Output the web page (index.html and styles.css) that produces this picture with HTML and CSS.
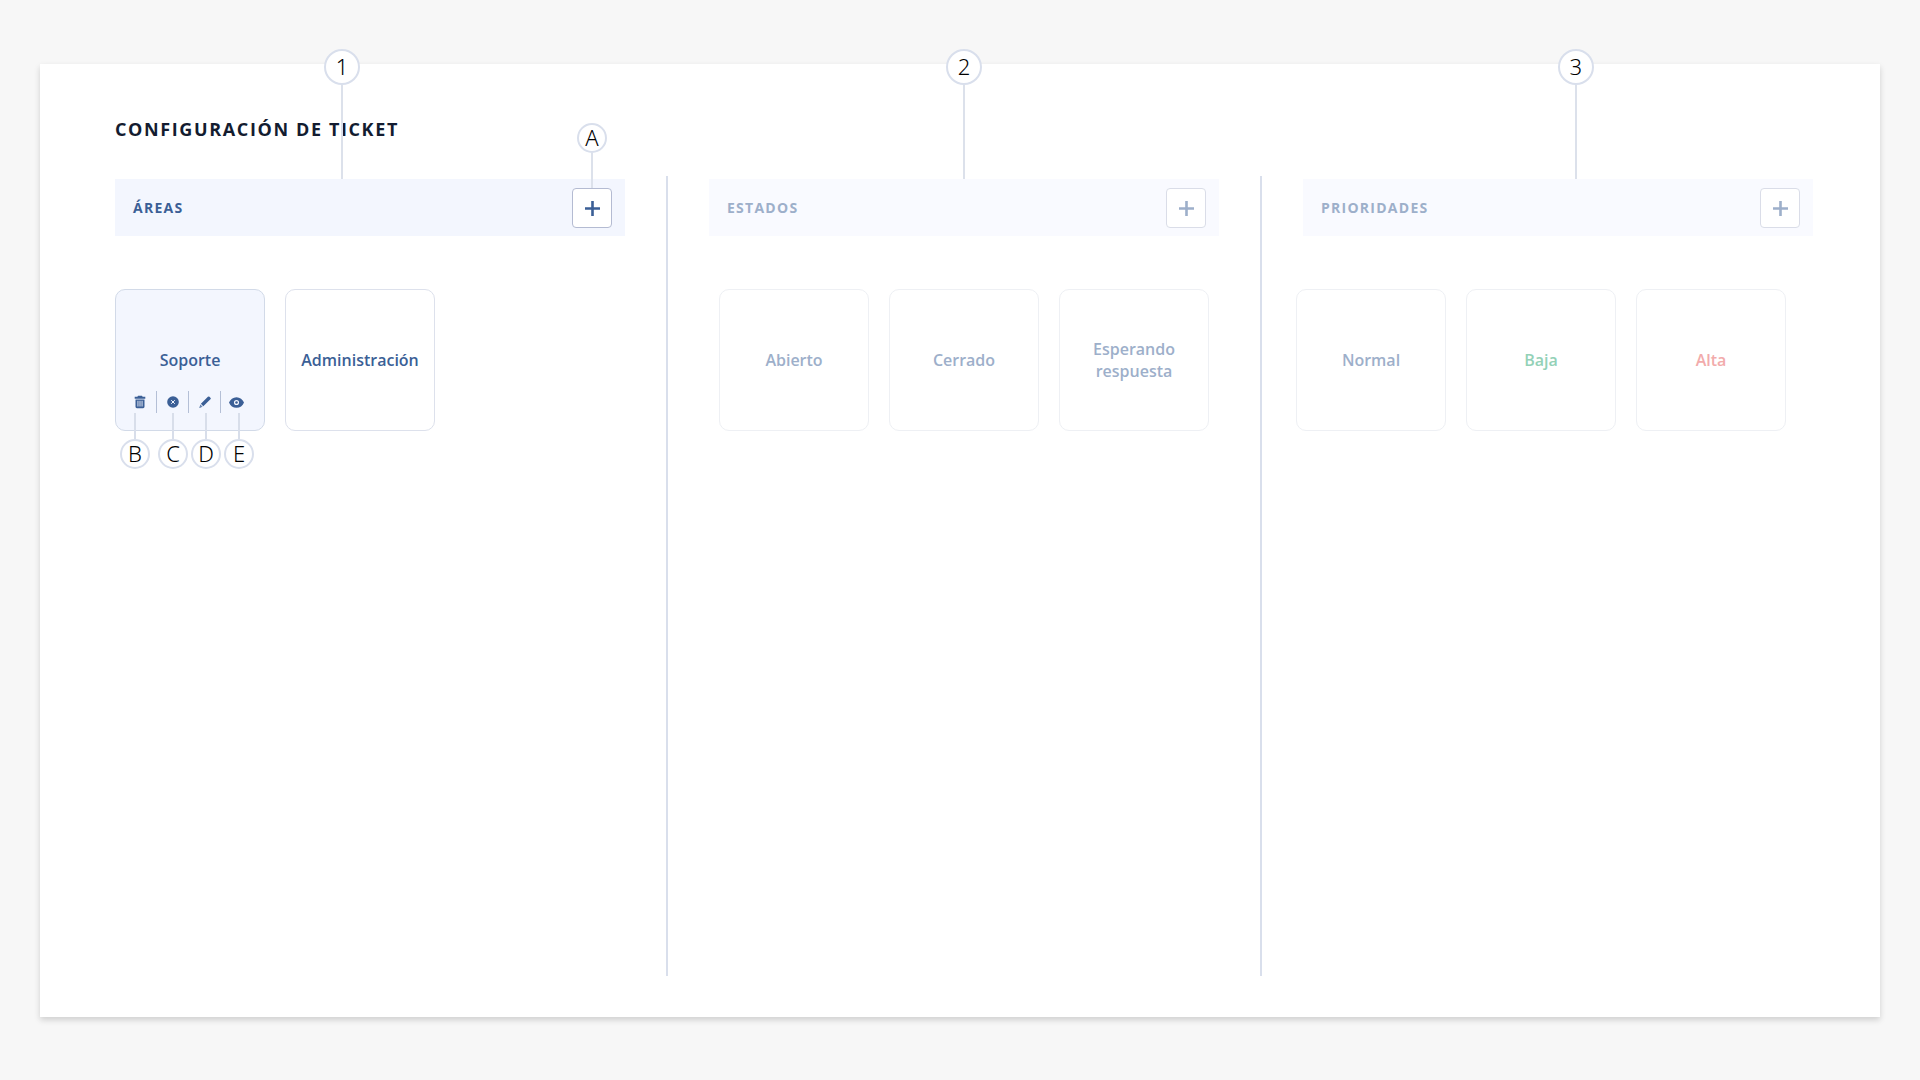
FILE: index.html
```
<!DOCTYPE html>
<html lang="es">
<head>
  <meta charset="UTF-8" />
  <meta name="viewport" content="width=device-width, initial-scale=1.0" />
  <title>Configuración de ticket</title>
  <link rel="stylesheet" href="styles.css">
</head>
<body>

<main class="panel">
  <h1>Configuración de ticket</h1>

  <div class="tablero">

    <section class="columna">
      <span class="marca marca-areas"><span class="circulo">1</span></span>
      <header class="cabecera">
        <h2>Áreas</h2>
        <div class="agregar-caja">
          <span class="marca marca-letra marca-agregar"><span class="circulo">A</span></span>
          <button type="button" class="agregar" aria-label="Agregar área">
            <svg width="16" height="16" viewBox="0 0 16 16"><path d="M8.500 1v15M1 8.500h15" /></svg>
          </button>
        </div>
      </header>
      <div class="tarjetas">
        <article class="tarjeta activa">
          <h3>Soporte</h3>
          <div class="acciones">
            <button type="button" aria-label="Eliminar">
              <svg width="12" height="14" viewBox="0 0 12 14">
                <path d="M4 0.8h4l0.6 1H11.3v1.9H0.7V1.800H3.400z" />
                <path fill-rule="evenodd" d="M1.500 4.500h9v7.300a1.400 1.400 0 0 1-1.400 1.400H2.900a1.400 1.400 0 0 1-1.400-1.400zM3.500 5.800v5.800h0.900V5.800zM5.550 5.800v5.800h0.900V5.800zM7.600 5.800v5.800h0.900V5.800z" />
              </svg>
            </button>
            <button type="button" aria-label="Desactivar">
              <svg width="12" height="12" viewBox="0 0 12 12">
                <circle cx="6" cy="6" r="5.800" />
                <path class="trazo" d="M4.200 4.200l3.600 3.600M7.800 4.200L4.200 7.800" />
              </svg>
            </button>
            <button type="button" aria-label="Editar">
              <svg width="12" height="12" viewBox="0 0 12 12">
                <path d="M8.900 0.800a1.100 1.100 0 0 1 1.600 0l0.900 0.900a1.100 1.100 0 0 1 0 1.600L4.300 10.200 1.900 7.800zM1.400 8.600l2.100 2.100L0.300 11.900z" />
                <circle class="punta" cx="2" cy="10" r="0.600" />
              </svg>
            </button>
            <button type="button" aria-label="Ver">
              <svg width="15" height="11" viewBox="0 0 14 10">
                <path fill-rule="evenodd" d="M7 0C3.800 0 1.200 2 0 5c1.200 3 3.800 5 7 5s5.800-2 7-5c-1.200-3-3.800-5-7-5zM7 2.600a2.400 2.400 0 1 1 0 4.800a2.400 2.400 0 0 1 0-4.800z" />
                <circle cx="7" cy="5" r="1.200" />
              </svg>
            </button>
          </div>
          <div class="leyendas">
            <span class="marca-letra"><span class="circulo">B</span></span>
            <span class="marca-letra"><span class="circulo">C</span></span>
            <span class="marca-letra"><span class="circulo">D</span></span>
            <span class="marca-letra"><span class="circulo">E</span></span>
          </div>
        </article>
        <article class="tarjeta">
          <h3>Administración</h3>
        </article>
      </div>
    </section>

    <div class="separador"></div>

    <section class="columna atenuada">
      <span class="marca marca-estados"><span class="circulo">2</span></span>
      <header class="cabecera">
        <h2>Estados</h2>
        <button type="button" class="agregar" aria-label="Agregar estado">
          <svg width="16" height="16" viewBox="0 0 16 16"><path d="M8.500 1v15M1 8.500h15" /></svg>
        </button>
      </header>
      <div class="tarjetas centradas">
        <article class="tarjeta"><h3>Abierto</h3></article>
        <article class="tarjeta"><h3>Cerrado</h3></article>
        <article class="tarjeta"><h3>Esperando respuesta</h3></article>
      </div>
    </section>

    <div class="separador"></div>

    <section class="columna atenuada">
      <span class="marca marca-prioridades"><span class="circulo">3</span></span>
      <header class="cabecera">
        <h2>Prioridades</h2>
        <button type="button" class="agregar" aria-label="Agregar prioridad">
          <svg width="16" height="16" viewBox="0 0 16 16"><path d="M8.500 1v15M1 8.500h15" /></svg>
        </button>
      </header>
      <div class="tarjetas prioridades">
        <article class="tarjeta"><h3>Normal</h3></article>
        <article class="tarjeta baja"><h3>Baja</h3></article>
        <article class="tarjeta alta"><h3>Alta</h3></article>
      </div>
    </section>

  </div>
</main>

</body>
</html>
```
FILE: styles.css
```
* {
  box-sizing: border-box;
}

body {
  margin: 0;
  padding: 64px 40px 63px;
  min-height: 100vh;
  display: flex;
  font-family: 'Open Sans', sans-serif;
  background: #f7f7f7;
  color: #3b5f96;
}

h1, h2, h3 {
  margin: 0;
  font-weight: 600;
}

h1, h2 {
  font-weight: 700;
  letter-spacing: 0.09em;
  text-transform: uppercase;
}

.panel {
  flex: 1;
  display: flex;
  flex-direction: column;
  padding: 53px 67px 41px 75px;
  background: #fff;
  box-shadow: 0 3px 6px rgba(0, 0, 0, 0.16);
}

h1 {
  margin-bottom: 35px;
  font-size: 18px;
  line-height: 24px;
  color: #131c30;
}

.tablero {
  flex: 1;
  display: grid;
  grid-template-columns: 1fr 2px 1fr 2px 1fr;
  column-gap: 41px;
}

.separador {
  background: #d9dfec;
}

.columna {
  position: relative;
  padding-top: 3px;
}

/* cabecera de cada columna */
.cabecera {
  display: flex;
  align-items: center;
  justify-content: space-between;
  height: 57px;
  padding: 0 13px 0 18px;
  background: #f3f6fe;
}

.cabecera h2 {
  font-size: 14px;
  line-height: 20px;
}

.agregar-caja {
  position: relative;
}

.agregar {
  display: flex;
  align-items: center;
  justify-content: center;
  width: 40px;
  height: 40px;
  padding: 0;
  background: #fff;
  border: 1px solid #b4bbd2;
  border-radius: 4px;
  cursor: pointer;
}

.agregar svg {
  stroke: #3b5f96;
  stroke-width: 2.6;
}

/* tarjetas */
.tarjetas {
  display: flex;
  flex-wrap: wrap;
  gap: 20px;
  margin-top: 53px;
}

.centradas {
  justify-content: center;
}

.prioridades {
  margin-left: -7px;
}

.tarjeta {
  position: relative;
  display: grid;
  grid-template-rows: 1fr auto 1fr;
  width: 150px;
  height: 142px;
  border: 1px solid #dde1ec;
  border-radius: 10px;
  text-align: center;
}

.tarjeta h3 {
  grid-row: 2;
  padding: 0 12px;
  font-size: 16px;
  line-height: 22px;
}

.activa {
  background: #f3f6fe;
  border-color: #d2dae8;
}

.acciones {
  grid-row: 3;
  display: flex;
  height: 22px;
  margin-top: 20px;
  padding-left: 8px;
}

.acciones button {
  display: flex;
  align-items: center;
  justify-content: center;
  width: 32px;
  padding: 0;
  border: 0;
  background: none;
  cursor: pointer;
}

.acciones button + button {
  border-left: 1px solid #b4bfd6;
}

.acciones svg {
  fill: #3b5f96;
}

.acciones .trazo {
  stroke: #f3f6fe;
  stroke-width: 1;
}

.acciones .punta {
  fill: #f3f6fe;
}

/* columnas sin foco */
.atenuada .cabecera {
  background: #f9faff;
}

.atenuada h2,
.atenuada h3 {
  color: #9dafca;
}

.atenuada .agregar {
  border-color: #dadde8;
}

.atenuada .agregar svg {
  stroke: #9dafca;
}

.atenuada .tarjeta {
  border-color: #eef0f4;
}

.atenuada .baja h3 {
  color: #93d1b7;
}

.atenuada .alta h3 {
  color: #f2abab;
}

/* marcas con número o letra */
.circulo {
  display: flex;
  align-items: center;
  justify-content: center;
  width: 36px;
  height: 36px;
  padding-bottom: 2px;
  border: 2px solid #d9dfec;
  border-radius: 50%;
  background: #fff;
  font-family: 'Noto Sans', sans-serif;
  font-size: 22px;
  line-height: 22px;
  font-weight: 300;
  color: #000;
}

.marca {
  position: absolute;
  bottom: 100%;
  display: flex;
  flex-direction: column;
  align-items: center;
  transform: translateX(-50%);
}

.marca::after {
  content: "";
  width: 2px;
  height: 94px;
  background: #dce1eb;
}

.columna > .marca {
  top: -127px;
  bottom: auto;
}

.marca-areas {
  left: 44.5%;
}

.marca-estados {
  left: 50%;
}

.marca-prioridades {
  left: 53.5%;
}

.marca-letra .circulo {
  width: 30px;
  height: 30px;
}

.marca-agregar {
  left: 50%;
}

.marca-agregar::after {
  height: 35px;
}

.leyendas {
  position: absolute;
  top: 123px;
  left: 4px;
  display: flex;
  gap: 3px;
}

.leyendas .marca-letra {
  display: flex;
  flex-direction: column;
  align-items: center;
}

.leyendas .marca-letra:first-child {
  margin-right: 5px;
}

.leyendas .marca-letra::before {
  content: "";
  width: 2px;
  height: 26px;
  background: #d8deea;
}
```
